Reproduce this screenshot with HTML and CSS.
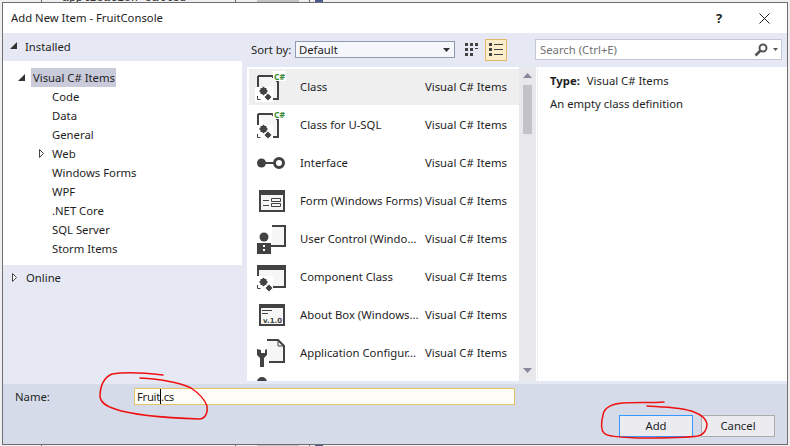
FILE: index.html
```html
<!DOCTYPE html>
<html lang="en">
<head>
    <meta charset="UTF-8">
    <title>Add New Item - FruitConsole</title>
    <link rel="stylesheet" href="styles.css">
</head>
<body>
    <span class="behind-text">application called</span>
    <span class="behind-block"></span>

    <div class="dialog">
        <div class="titlebar">
            <span class="title">Add New Item - FruitConsole</span>
            <span class="help">?</span>
            <svg class="close" width="11" height="11" viewBox="0 0 11 11"><path d="M.5.5l10 10M10.500.5l-10 10" stroke="#1e1e1e" fill="none"/></svg>
        </div>

        <div class="main">
            <div class="side">
                <div class="side-head">
                    <svg class="arrow" width="8" height="8" viewBox="0 0 8 8"><path d="M7 0v7H0z" fill="#333"/></svg>
                    <span>Installed</span>
                </div>
                <div class="tree">
                    <div class="tree-row">
                        <svg class="tree-arrow" width="8" height="8" viewBox="0 0 8 8"><path d="M7 0v7H0z" fill="#333"/></svg>
                        <span class="tree-selected">Visual C# Items</span>
                    </div>
                    <div class="tree-row tree-child">Code</div>
                    <div class="tree-row tree-child">Data</div>
                    <div class="tree-row tree-child">General</div>
                    <div class="tree-row tree-child">
                        <svg class="tree-closed" width="6" height="9" viewBox="0 0 6 9"><path d="M.5.5l4 4-4 4z" fill="#fff" stroke="#444"/></svg>
                        Web
                    </div>
                    <div class="tree-row tree-child">Windows Forms</div>
                    <div class="tree-row tree-child">WPF</div>
                    <div class="tree-row tree-child">.NET Core</div>
                    <div class="tree-row tree-child">SQL Server</div>
                    <div class="tree-row tree-child">Storm Items</div>
                </div>
                <div class="side-head side-online">
                    <svg class="arrow-closed" width="6" height="9" viewBox="0 0 6 9"><path d="M.5.5l4 4-4 4z" fill="#fff" stroke="#444"/></svg>
                    <span>Online</span>
                </div>
            </div>

            <div class="content">
                <div class="toolbar">
                    <span class="sort-label">Sort by:</span>
                    <div class="sort-select">
                        <span>Default</span>
                        <svg width="7" height="4" viewBox="0 0 7 4"><path d="M0 0h7L3.500 4z" fill="#333"/></svg>
                    </div>
                    <svg class="view-grid" width="14" height="14" viewBox="0 0 14 14" fill="#424242">
                        <path d="M0 0h3v3H0zM5 0h3v3H5zM10 0h3v3h-3zM0 5h3v3H0zM5 5h3v3H5zM10 5h3v1h-3zM0 10h3v3H0zM5 10h3v3H5z"/>
                    </svg>
                    <div class="view-list">
                        <svg width="14" height="14" viewBox="0 0 14 14" fill="#424242">
                            <path d="M0 0h3v3H0zM5 1h9v1H5zM0 5h3v3H0zM5 6h9v1H5zM0 10h3v3H0zM5 11h9v1H5z"/>
                        </svg>
                    </div>
                    <div class="search">
                        <span class="search-text">Search (Ctrl+E)</span>
                        <svg width="14" height="14" viewBox="0 0 14 14"><circle cx="9" cy="5" r="3.500" fill="none" stroke="#555" stroke-width="2"/><path d="M6.500 7.500L1.500 12.500" stroke="#555" stroke-width="2.600"/></svg>
                        <svg class="search-drop" width="5" height="3" viewBox="0 0 5 3"><path d="M0 0h5L2.500 3z" fill="#555"/></svg>
                    </div>
                </div>

                <div class="panes">
                    <div class="list">
                        <div class="item item-selected">
                            <svg class="icon" width="36" height="32" viewBox="0 0 36 32">
                                <path d="M7 5h14l6 6v17h-5M10 28H7V5" fill="#f6f6f6" stroke="#424242" stroke-width="2"/>
                                <rect x="22" y="0" width="13" height="10" fill="#fff"/>
                                <text class="csharp" x="23" y="9">C#</text>
                                <path d="M4 16h18v15H4z" fill="#fff"/>
                                <path d="M9.500 17h6v6h-6zM12.500 15.500l4.500 4.500-4.500 4.500-4.500-4.500zM15 24h4v4h-4zM17 22.500l3.500 3.500-3.500 3.500-3.500-3.500z" fill="#424242"/>
                                <path d="M6.500 25v3.500h3M22 28.500h3" stroke="#424242" fill="none"/>
                            </svg>
                            <span class="item-name">Class</span>
                            <span class="item-type">Visual C# Items</span>
                        </div>
                        <div class="item">
                            <svg class="icon" width="36" height="32" viewBox="0 0 36 32">
                                <path d="M7 5h14l6 6v17h-5M10 28H7V5" fill="#f6f6f6" stroke="#424242" stroke-width="2"/>
                                <rect x="22" y="0" width="13" height="10" fill="#fff"/>
                                <text class="csharp" x="23" y="9">C#</text>
                                <path d="M4 16h18v15H4z" fill="#fff"/>
                                <path d="M9.500 17h6v6h-6zM12.500 15.500l4.500 4.500-4.500 4.500-4.500-4.500zM15 24h4v4h-4zM17 22.500l3.500 3.500-3.500 3.500-3.500-3.500z" fill="#424242"/>
                                <path d="M6.500 25v3.500h3M22 28.500h3" stroke="#424242" fill="none"/>
                            </svg>
                            <span class="item-name">Class for U-SQL</span>
                            <span class="item-type">Visual C# Items</span>
                        </div>
                        <div class="item">
                            <svg class="icon" width="36" height="32" viewBox="0 0 36 32">
                                <circle cx="10.500" cy="16" r="4.500" fill="#424242"/>
                                <path d="M14 16h10" stroke="#424242" stroke-width="2"/>
                                <circle cx="28" cy="16" r="4.500" fill="#fff" stroke="#424242" stroke-width="3"/>
                            </svg>
                            <span class="item-name">Interface</span>
                            <span class="item-type">Visual C# Items</span>
                        </div>
                        <div class="item">
                            <svg class="icon" width="36" height="32" viewBox="0 0 36 32">
                                <path d="M9 6h24v20H9z" fill="#f6f6f6" stroke="#424242" stroke-width="2"/>
                                <path d="M8 5h26v5H8zM12 15h6v1h-6zM12 20h6v1h-6z" fill="#424242"/>
                                <path d="M20.500 13.500h9v3h-9zM20.500 18.500h9v3h-9z" fill="none" stroke="#424242"/>
                            </svg>
                            <span class="item-name">Form (Windows Forms)</span>
                            <span class="item-type">Visual C# Items</span>
                        </div>
                        <div class="item">
                            <svg class="icon" width="36" height="32" viewBox="0 0 36 32">
                                <path d="M21 3h13v20H20" fill="#f6f6f6" stroke="#424242" stroke-width="2"/>
                                <circle cx="13" cy="14" r="4.500" fill="#424242"/>
                                <path d="M6 20h14v11H6z" fill="#424242"/>
                                <path d="M12 22h2v2h-2zM12 26h2v2h-2z" fill="#fff"/>
                            </svg>
                            <span class="item-name">User Control (Windo...</span>
                            <span class="item-type">Visual C# Items</span>
                        </div>
                        <div class="item">
                            <svg class="icon" width="36" height="32" viewBox="0 0 36 32">
                                <path d="M7 5h27v21H7z" fill="#f6f6f6" stroke="#424242" stroke-width="2"/>
                                <path d="M6 4h28v5H6z" fill="#424242"/>
                                <path d="M4 15h18v16H4z" fill="#fff"/>
                                <path d="M9.500 18h6v6h-6zM12.500 16.500l4.500 4.500-4.500 4.500-4.500-4.500zM16 25h4v4h-4zM18 23.500l3.500 3.500-3.500 3.500-3.500-3.500z" fill="#424242"/>
                                <path d="M6.500 24v3.500h3" stroke="#424242" fill="none"/>
                            </svg>
                            <span class="item-name">Component Class</span>
                            <span class="item-type">Visual C# Items</span>
                        </div>
                        <div class="item">
                            <svg class="icon" width="36" height="32" viewBox="0 0 36 32">
                                <path d="M9 6h24v20H9z" fill="#f6f6f6" stroke="#424242" stroke-width="2"/>
                                <path d="M8 5h26v4H8zM11 11h10v1H11zM11 14h6v1h-6z" fill="#424242"/>
                                <text class="version" x="12" y="24">v.1.0</text>
                            </svg>
                            <span class="item-name">About Box (Windows...</span>
                            <span class="item-type">Visual C# Items</span>
                        </div>
                        <div class="item">
                            <svg class="icon" width="36" height="32" viewBox="0 0 36 32">
                                <path d="M16 3h11l6 6v16H18" fill="#f6f6f6" stroke="#424242" stroke-width="2"/>
                                <path d="M27 3v6h6" fill="none" stroke="#424242"/>
                                <path d="M6 12v6l3 3v9h4v-9l3-3v-6l-2 1v3h-4v-3z" fill="#424242"/>
                            </svg>
                            <span class="item-name">Application Configur...</span>
                            <span class="item-type">Visual C# Items</span>
                        </div>
                        <div class="item">
                            <svg class="icon" width="36" height="32" viewBox="0 0 36 32">
                                <circle cx="11" cy="7" r="5" fill="#424242"/>
                            </svg>
                        </div>
                    </div>

                    <div class="scroll">
                        <svg class="scroll-arrow" width="9" height="5" viewBox="0 0 9 5"><path d="M4.500 0L9 5H0z" fill="#868999"/></svg>
                        <div class="scroll-thumb"></div>
                        <svg class="scroll-down" width="9" height="5" viewBox="0 0 9 5"><path d="M0 0h9L4.500 5z" fill="#868999"/></svg>
                    </div>

                    <div class="detail">
                        <div class="detail-type"><b>Type:</b><span>Visual C# Items</span></div>
                        <div>An empty class definition</div>
                    </div>
                </div>
            </div>
        </div>

        <div class="footer">
            <div class="name-row">
                <span class="name-label">Name:</span>
                <div class="name-input">Fruit<span class="caret"></span>.cs</div>
            </div>
            <div class="buttons">
                <button class="btn btn-default" type="button">Add</button>
                <button class="btn" type="button">Cancel</button>
            </div>
        </div>
    </div>

    <!-- marcas a caneta por cima do dialogo -->
    <svg class="scribble" width="790" height="446" viewBox="0 0 790 446" fill="none" stroke="#ee1111" stroke-width="1.500" stroke-linecap="round" stroke-linejoin="round">
        <path d="M163 375C145 373 125 372 112 374C103 378 100 388 100 397C101 403 106 406 115 409C135 416 170 418 200 419C206 418 208 412 207 406C205 400 200 394 191 388C178 382 158 379 140 378"/>
        <path d="M664 402C650 403 635 402 623 403C610 404 604 408 603 415C601 423 601 430 604 433C608 437 620 437 640 438C660 438 685 438 698 436C705 434 707 428 707 424C706 419 702 415 694 412C682 407 664 407 647 406"/>
    </svg>
</body>
</html>
```

FILE: styles.css
```css
body {
    margin: 0;
    width: 790px;
    height: 446px;
    overflow: hidden;
    position: relative;
    background-color: #efeff2;
    background-image:
        linear-gradient(#6a6a6a, #6a6a6a),
        linear-gradient(#6a6a6a, #6a6a6a),
        linear-gradient(#6a6a6a, #6a6a6a),
        linear-gradient(#c4c4c4, #c4c4c4);
    background-size: 1px 100%, 1px 100%, 1px 100%, 42px 100%;
    background-position: 41px 0, 235px 0, 309px 0, 257px 0;
    background-repeat: no-repeat;
    font-family: "Noto Sans", sans-serif;
    font-size: 11.3px;
    color: #1e1e1e;
}
.behind-text {
    position: absolute;
    left: 62px;
    top: -9px;
    font-family: "Liberation Mono", monospace;
    font-size: 11.5px;
    color: #222;
}
.behind-block {
    position: absolute;
    left: 315px;
    top: 0;
    width: 8px;
    height: 446px;
    background-color: #4a5a8c;
}
.dialog {
    position: relative;
    margin: 2px 0 0 2px;
    width: 784px;
    height: 441px;
    border: 1px solid #6f6f6f;
    background-color: #e6e9f4;
    display: flex;
    flex-direction: column;
}
.titlebar {
    height: 30px;
    flex: none;
    background-color: #fff;
    display: flex;
    align-items: center;
    padding-left: 8px;
}
.title {
    flex: 1;
    margin-bottom: 2px;
}
.help {
    width: 14px;
    font-size: 13px;
    font-weight: 700;
    margin-right: 29px;
}
.close {
    margin-right: 17px;
}
.main {
    flex: 1;
    display: flex;
    min-height: 0;
}
.side {
    width: 239px;
    flex: none;
}
.side-head {
    height: 28px;
    box-sizing: border-box;
    padding: 0 0 2px 7px;
    display: flex;
    align-items: center;
    gap: 7px;
}
.side-online {
    height: 27px;
    padding-left: 9px;
    gap: 8px;
}
.tree {
    height: 204px;
    box-sizing: border-box;
    padding-top: 7px;
    background-color: #fff;
}
.tree-row {
    height: 19px;
    display: flex;
    align-items: center;
    position: relative;
}
.tree-arrow {
    margin-left: 15px;
    margin-right: 5px;
}
.tree-selected {
    background-color: #c9cbdb;
    padding: 0 2px;
    height: 19px;
    line-height: 19px;
    width: 81px;
    white-space: nowrap;
}
.tree-child {
    padding-left: 49px;
}
.tree-closed {
    position: absolute;
    left: 36px;
    top: 5px;
}
.content {
    flex: 1;
    margin-left: 5px;
    margin-bottom: 3px;
    display: flex;
    flex-direction: column;
    min-width: 0;
}
.toolbar {
    height: 34px;
    flex: none;
    box-sizing: border-box;
    padding-bottom: 1px;
    display: flex;
    align-items: center;
}
.sort-label {
    width: 44px;
    margin-left: 4px;
}
.sort-select {
    width: 151px;
    height: 15px;
    border: 1px solid #8e99b0;
    background-color: #f6f7fb;
    display: flex;
    align-items: center;
    justify-content: space-between;
    padding-right: 4px;
    padding-left: 3px;
}
.view-grid {
    margin-left: 10px;
}
.view-list {
    width: 20px;
    height: 20px;
    margin-left: 6px;
    border: 1px solid #e0b668;
    background-color: #fdeecb;
    display: flex;
    align-items: center;
    justify-content: center;
}
.search {
    margin-left: auto;
    margin-right: 5px;
    width: 238px;
    height: 19px;
    padding: 0 3px 0 4px;
    border: 1px solid #c3c8d6;
    background-color: #fff;
    display: flex;
    align-items: center;
    gap: 4px;
}
.search-text {
    flex: 1;
    color: #717171;
}
.search-drop {
    margin-left: 1px;
}
.panes {
    flex: 1;
    display: flex;
    min-height: 0;
    background-color: #fff;
}
.list {
    width: 272px;
    flex: none;
    padding-top: 2px;
    box-sizing: border-box;
    overflow: hidden;
}
.item {
    height: 36px;
    margin: 0 0 2px 2px;
    display: flex;
    align-items: center;
}
.item-selected {
    background-color: #efefef;
}
.icon {
    margin-left: 2px;
    margin-right: 13px;
    flex: none;
    overflow: visible;
}
.csharp {
    font-family: "Noto Sans", sans-serif;
    font-size: 8.5px;
    font-weight: 700;
    fill: #388a34;
}
.version {
    font-family: "DejaVu Sans", sans-serif;
    font-size: 7px;
    font-weight: 700;
    fill: #424242;
}
.item-name {
    width: 125px;
    flex: none;
    white-space: nowrap;
    margin-bottom: 2px;
}
.item-type {
    white-space: nowrap;
    margin-bottom: 2px;
}
.scroll {
    width: 17px;
    flex: none;
    background-color: #e8e8ec;
    display: flex;
    flex-direction: column;
    align-items: center;
}
.scroll-arrow {
    margin-top: 6px;
}
.scroll-thumb {
    width: 9px;
    height: 49px;
    margin-top: 7px;
    background-color: #c2c3c9;
}
.scroll-down {
    margin-top: auto;
    margin-bottom: 8px;
}
.detail {
    flex: 1;
    margin-left: 1px;
    border-left: 1px solid #eef0f6;
    padding: 5px 12px;
}
.detail-type {
    margin-bottom: 6px;
    line-height: 18px;
}
.detail-type b {
    margin-right: 7px;
}
.footer {
    height: 60px;
    flex: none;
    box-sizing: border-box;
    padding: 4px 12px 0 12px;
    background-color: #d6dbe9;
}
.name-row {
    display: flex;
    align-items: center;
}
.name-label {
    width: 119px;
}
.name-input {
    width: 377px;
    height: 15px;
    line-height: 15px;
    padding-left: 2px;
    border: 1px solid #e5c365;
    background-color: #fffdf8;
    letter-spacing: -0.3px;
}
.caret {
    display: inline-block;
    width: 1px;
    height: 15px;
    background-color: #000;
    vertical-align: top;
}
.buttons {
    display: flex;
    justify-content: flex-end;
    gap: 8px;
    margin-top: 10px;
}
.btn {
    width: 74px;
    height: 22px;
    padding: 0 0 2px;
    border: 1px solid #acacac;
    background-color: #ececf0;
    font-family: "Noto Sans", sans-serif;
    font-size: 11.3px;
    color: #1e1e1e;
}
.btn-default {
    border-color: #3399ff;
}
.scribble {
    position: absolute;
    left: 0;
    top: 0;
}
```
